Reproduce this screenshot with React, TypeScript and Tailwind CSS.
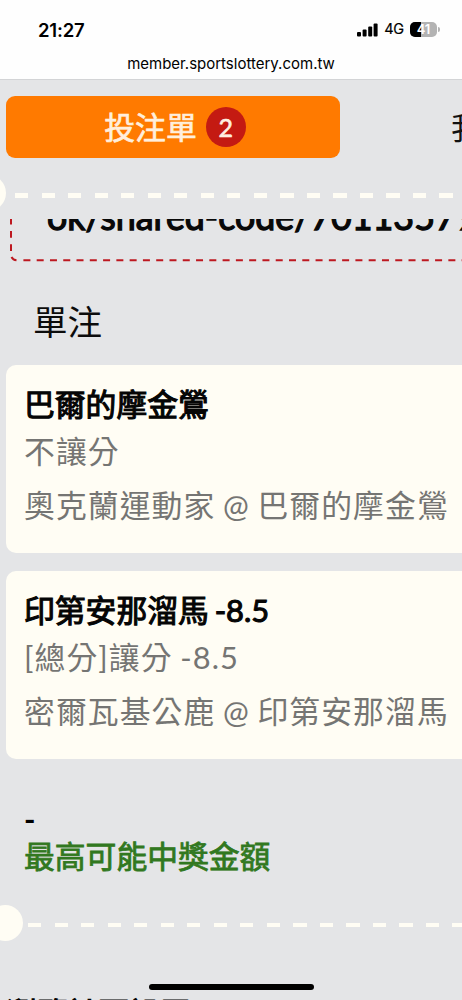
interface Bet {
  pick: string;
  market: string;
  game: string;
}

const bets: Bet[] = [
  { pick: '巴爾的摩金鶯', market: '不讓分', game: '奧克蘭運動家 @ 巴爾的摩金鶯' },
  { pick: '印第安那溜馬 -8.5', market: '[總分]讓分 -8.5', game: '密爾瓦基公鹿 @ 印第安那溜馬' },
];

function StatusBar() {
  return (
    <header className="h-[80px] shrink-0 bg-[#fefefe] border-b border-[#d3d4d6] font-['Inter',sans-serif] text-black">
      <div className="flex h-[52px] items-start justify-between pl-[38px] pr-[22px] pt-5">
        <span className="text-[18.5px] leading-5 font-semibold tracking-[-0.2px]">21:27</span>
        <div className="flex items-center pt-[1px]">
          <svg width="21" height="15" viewBox="0 0 21 15">
            <rect x="0" y="10" width="4" height="4.5" rx="1" />
            <rect x="5.6" y="7.5" width="4" height="7" rx="1" />
            <rect x="11.2" y="4.5" width="4" height="10" rx="1" />
            <rect x="16.6" y="1.5" width="4" height="13" rx="1" />
          </svg>
          <span className="ml-[6px] text-[14.5px] leading-4 tracking-[-0.2px] [-webkit-text-stroke:0.2px]">4G</span>
          <div className="relative ml-[6px] flex h-[15px] w-[27px] items-center justify-center overflow-hidden rounded-[5px] bg-[#b3b3b3]">
            <div className="absolute inset-y-0 left-0 w-[11px] bg-black" />
            <span className="relative text-[13px] leading-none font-semibold text-white">41</span>
          </div>
          <div className="ml-px h-[5px] w-[2px] rounded-r-full bg-[#b3b3b3]" />
        </div>
      </div>
      <div className="text-center text-[15px] leading-6">member.sportslottery.com.tw</div>
    </header>
  );
}

function BetCard({ pick, market, game }: Bet) {
  return (
    <div className="ml-[6px] h-[188px] w-[470px] shrink-0 rounded-[10px] bg-[#fffdf4] pl-[18px] pt-[17px] whitespace-nowrap">
      <div className="text-[30.8px] leading-[46px] [word-spacing:-2px] text-[#050505] [-webkit-text-stroke:1.1px]">{pick}</div>
      <div className="text-[30.8px] leading-[48px] tracking-[1.1px] [word-spacing:-1.4px] text-[#757573]">{market}</div>
      <div className="mt-[6px] text-[30.8px] leading-[48px] tracking-[1.1px] [word-spacing:-1.4px] text-[#757573]">{game}</div>
    </div>
  );
}

export default function App() {
  return (
    <div className="relative flex h-[1000px] w-[462px] flex-col overflow-hidden bg-[#e4e5e7] font-['Lato','Noto_Sans_CJK_TC',sans-serif]">
      <StatusBar />

      <div className="mt-[16px] flex h-[62px] shrink-0 items-center pl-[6px] whitespace-nowrap">
        <div className="flex h-[62px] w-[334px] shrink-0 items-center justify-center rounded-[9px] bg-[#ff7a00] pl-[4px]">
          <span className="pt-[3px] text-[30.8px] leading-none text-[#ffefdd] [-webkit-text-stroke:0.7px]">投注單</span>
          <span className="ml-[9px] flex size-10 items-center justify-center rounded-full bg-[#c41a12] text-[25px] leading-none text-[#ffefe0] [-webkit-text-stroke:0.6px]">2</span>
        </div>
        <span className="ml-[111px] pt-[3px] text-[30.8px] leading-none text-[#111]">我的投注</span>
      </div>

      {/* top perforation */}
      <div className="mt-[19px] flex h-[42px] shrink-0 items-start">
        <div className="-mt-[2px] -ml-[30px] size-9 shrink-0 rounded-full bg-[#fffdf4]" />
        <div className="mt-4 ml-[9px] h-[5px] flex-1 bg-[repeating-linear-gradient(to_right,#fffdf4_0_13.3px,transparent_13.3px_26.52px)]" />
      </div>

      {/* share link, scrolled under the perforation */}
      <div className="h-[43px] shrink-0 overflow-hidden">
        <div className="relative ml-[10px] -mt-[57px] h-[100px] w-[500px]">
          <svg className="absolute inset-0" width="500" height="100" fill="none" stroke="#bd1820" strokeWidth="2">
            <path d="M1 57V94" strokeDasharray="6.7 6.5" strokeDashoffset="1.2" />
            <path d="M1.5 95Q3 98 6.5 98.3" />
            <path d="M13.4 98.3H500" strokeDasharray="7 6.28" />
          </svg>
          <div className="pt-[31px] pl-[37px] text-[35.8px] leading-[48px] whitespace-nowrap text-[#080808] [-webkit-text-stroke:1.3px]">
            ok/shared-code/70113579
          </div>
        </div>
      </div>

      <h2 className="mt-[35px] h-[68px] shrink-0 pl-[33px] text-[34.5px] leading-[50px] text-[#0c0c0c]">單注</h2>

      <div className="flex shrink-0 flex-col gap-[18px]">
        {bets.map((bet) => (
          <BetCard key={bet.pick} {...bet} />
        ))}
      </div>

      <div className="mt-[45px] h-[101px] shrink-0 pl-6 text-[30.8px] text-[#317820]">
        <div className="leading-[32px] font-bold text-black">-</div>
        <div className="-mt-px leading-[44px] [-webkit-text-stroke:0.8px]">最高可能中獎金額</div>
      </div>

      {/* bottom perforation */}
      <div className="flex h-9 shrink-0 items-center">
        <div className="-ml-[13px] size-9 shrink-0 rounded-full bg-[#fffdf4]" />
        <div className="mt-[3px] ml-[5px] h-[4px] flex-1 bg-[repeating-linear-gradient(to_right,#fffdf4_0_13.3px,transparent_13.3px_26.52px)]" />
      </div>

      <div className="mt-[55px] shrink-0 pl-[6px] text-[30.8px] leading-[36px] text-black [-webkit-text-stroke:1.2px]">瀏覽計票設置</div>

      <div className="absolute bottom-[10px] left-[149px] h-[6px] w-[165px] rounded-full bg-black" />
    </div>
  );
}
